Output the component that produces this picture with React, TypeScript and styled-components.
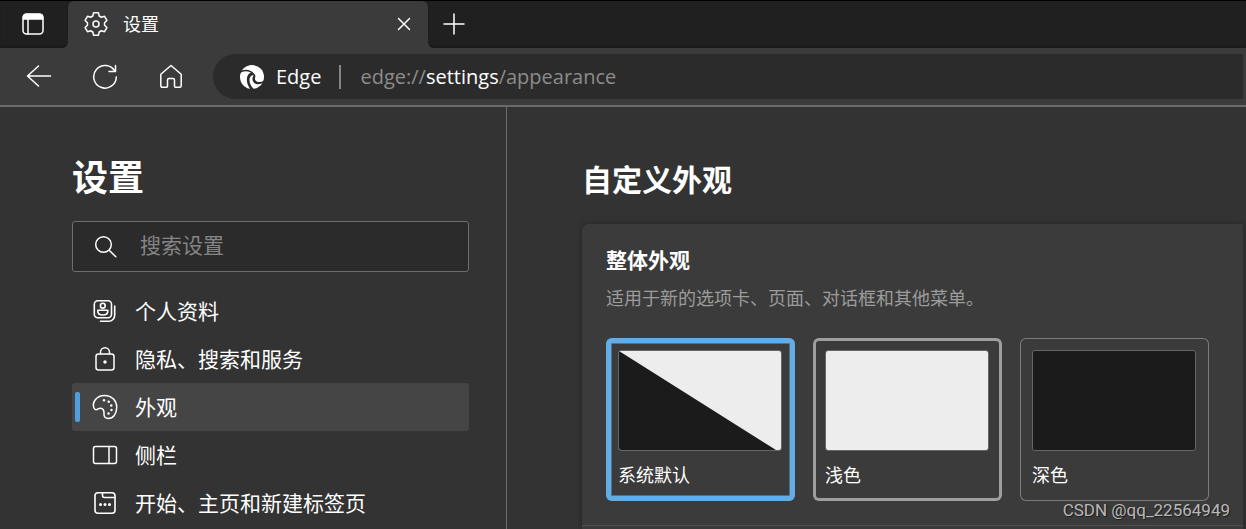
import React from "react";
import styled, { createGlobalStyle } from "styled-components";

const GlobalStyle = createGlobalStyle`
  *, *::before, *::after { box-sizing: border-box; }
  body {
    margin: 0;
    background: #333333;
    color: #ffffff;
    font-family: "Open Sans", "Noto Sans CJK SC", sans-serif;
  }
  button, input { font-family: inherit; }
`;

const Window = styled.div`
  min-height: 100vh;
  display: flex;
  flex-direction: column;
`;

/* ---------- browser chrome ---------- */

const TabStrip = styled.header`
  display: flex;
  height: 48px;
  background: #3b3b3b;
  border-top: 1px solid #000000;
`;

const StripSide = styled.div<{ $side: "start" | "end" }>`
  display: flex;
  align-items: center;
  padding-bottom: 2px;
  background: #202020;
  box-shadow: inset 0 -3px 3px -2px #181818;
  ${(p) =>
    p.$side === "start"
      ? "width: 68px; padding-left: 22px; border-bottom-right-radius: 6px;"
      : "flex: 1; padding-left: 14px; border-bottom-left-radius: 6px;"}
`;

const TabSlot = styled.div`
  width: 360px;
  background: linear-gradient(#202020 50%, #3b3b3b 50%);
`;

const Tab = styled.div`
  height: 100%;
  display: flex;
  align-items: center;
  padding: 0 16px 2px;
  background: #3b3b3b;
  border-radius: 6px 6px 0 0;
`;

const TabTitle = styled.span`
  flex: 1;
  margin-left: 15px;
  font-size: 18px;
  line-height: 24px;
`;

const IconButton = styled.button`
  display: flex;
  padding: 0;
  border: 0;
  background: none;
  color: inherit;
`;

const Toolbar = styled.div`
  display: flex;
  align-items: center;
  padding: 6px 3px 6px 26px;
  background: #3b3b3b;
  border-bottom: 2px solid #6a6a6a;
`;

const NavButtons = styled.nav`
  display: flex;
  gap: 40px;
  margin-right: 29px;
`;

const AddressBar = styled.div`
  flex: 1;
  display: flex;
  align-items: center;
  height: 45px;
  padding-left: 27px;
  background: #2b2b2b;
  border-radius: 23px 0 0 23px;
  font-size: 20px;
  line-height: 28px;
`;

const SiteName = styled.span`
  margin: 0 18px 0 12px;
`;

const Separator = styled.span`
  width: 2px;
  height: 24px;
  margin-right: 19px;
  background: #858585;
`;

const Url = styled.span`
  color: #8c8c8c;
`;

const UrlHost = styled.span`
  color: #ffffff;
`;

/* ---------- sidebar ---------- */

const Body = styled.div`
  flex: 1;
  display: flex;
`;

const Sidebar = styled.aside`
  width: 507px;
  flex-shrink: 0;
  padding: 45px 37px 0 72px;
  border-right: 1px solid #6e6e6e;
`;

const SidebarTitle = styled.h1`
  margin: 0 0 17px;
  font-size: 36px;
  line-height: 52px;
`;

const SearchBox = styled.label`
  display: flex;
  align-items: center;
  gap: 22px;
  height: 51px;
  margin-bottom: 15px;
  padding: 0 21px;
  background: #2b2b2b;
  border: 1px solid #6e6e6e;
  border-radius: 3px;
`;

const SearchInput = styled.input`
  flex: 1;
  min-width: 0;
  padding: 0 0 4px;
  border: 0;
  outline: 0;
  background: none;
  color: #ffffff;
  font-size: 21px;
  line-height: 28px;
  &::placeholder { color: #858585; opacity: 1; }
`;

const MenuList = styled.ul`
  margin: 0;
  padding: 0;
  list-style: none;
`;

const MenuLink = styled.a<{ $active?: boolean }>`
  display: flex;
  align-items: center;
  gap: 17px;
  height: 48px;
  padding-left: ${(p) => (p.$active ? "3px" : "20px")};
  border-radius: 3px;
  background: ${(p) => (p.$active ? "#454545" : "transparent")};
  color: #ffffff;
  font-size: 21px;
  line-height: 28px;
  text-decoration: none;
`;

const ActiveMark = styled.span`
  width: 5px;
  height: 30px;
  margin-right: -5px;
  border-radius: 2px;
  background: #4f9fe0;
`;

/* ---------- main pane ---------- */

const Main = styled.main`
  flex: 1;
  min-width: 0;
  display: flex;
  flex-direction: column;
  padding: 47px 3px 0 75px;
`;

const PageTitle = styled.h2`
  margin: 0 0 18px;
  font-size: 30px;
  line-height: 52px;
`;

const Card = styled.section`
  flex: 1;
  background: #3b3b3b;
  border-radius: 6px 0 0 0;
  box-shadow: 0 0 5px #242424;
`;

const ThemeSection = styled.div`
  padding: 20px 24px 24px;
  border-bottom: 1px solid #505050;
`;

const SectionTitle = styled.h3`
  margin: 0;
  font-size: 21px;
  line-height: 32px;
`;

const SectionHint = styled.p`
  margin: 9px 0 27px;
  color: #9c9c9c;
  font-size: 18px;
  line-height: 26px;
`;

const ThemeList = styled.div`
  display: flex;
  flex-wrap: wrap;
  gap: 18px;
`;

type Outline = "selected" | "hovered" | "plain";

const outlines: Record<Outline, string> = {
  selected: "inset 0 0 0 5px #62ade6, inset 0 0 0 6px #517187",
  hovered: "inset 0 0 0 3px #9e9e9e",
  plain: "inset 0 0 0 1px #7c7c7c",
};

const ThemeOption = styled.label<{ $outline: Outline }>`
  width: 189px;
  padding: 12px 13px 12px 12px;
  border-radius: 6px;
  box-shadow: ${(p) => outlines[p.$outline]};
`;

const HiddenRadio = styled.input`
  position: absolute;
  opacity: 0;
  margin: 0;
`;

const Preview = styled.svg`
  display: block;
  width: 100%;
  height: 101px;
  margin-bottom: 11px;
  border: 1px solid #666666;
  border-radius: 3px;
`;

const ThemeName = styled.span`
  display: block;
  font-size: 18px;
  line-height: 27px;
`;

const Watermark = styled.span`
  position: absolute;
  right: 16px;
  bottom: 8px;
  color: #b8b8b8;
  font-family: Roboto, "Liberation Sans", sans-serif;
  font-size: 17px;
  line-height: 22px;
  text-shadow: 1px 1px 1px #1c1c1c;
`;

const Shell = styled.div`
  position: relative;
`;

/* ---------- icons ---------- */

type IconProps = { size?: number; weight?: number; children: React.ReactNode };

const Icon = ({ size = 26, weight = 1.5, children }: IconProps) => (
  <svg
    width={size}
    height={size}
    viewBox={`0 0 ${size} ${size}`}
    fill="none"
    stroke="currentColor"
    strokeWidth={weight}
    strokeLinecap="round"
    strokeLinejoin="round"
    aria-hidden="true"
  >
    {children}
  </svg>
);

const gearOutline = [0, 60, 120, 180, 240, 300]
  .flatMap((deg) => {
    const a = (deg * Math.PI) / 180;
    return [[-3.2, -8], [-2.4, -11.2], [2.4, -11.2], [3.2, -8]].map(
      ([x, y]) =>
        `${(12 + x * Math.cos(a) - y * Math.sin(a)).toFixed(2)},${(12 + x * Math.sin(a) + y * Math.cos(a)).toFixed(2)}`
    );
  })
  .join(" ");

const GearIcon = () => (
  <Icon size={24}>
    <polygon points={gearOutline} />
    <circle cx="12" cy="12" r="3" />
  </Icon>
);

const TabsIcon = () => (
  <Icon size={22}>
    <rect x="1" y="1" width="20" height="20" rx="3.5" />
    <path d="M1.5 6V4A2.5 2.5 0 0 1 4 1.5h14A2.5 2.5 0 0 1 20.500 4v2z" fill="currentColor" />
    <path d="M6 6v15" />
  </Icon>
);

const CloseIcon = () => (
  <Icon size={16}>
    <path d="M2.500 2.500l11 11M13.500 2.500L2.500 13.500" />
  </Icon>
);

const PlusIcon = () => (
  <Icon size={24}>
    <path d="M12 2v20M2 12h20" />
  </Icon>
);

const BackIcon = () => (
  <Icon>
    <path d="M24.500 12H1.500M12.500 2L1.500 12l11 10" />
  </Icon>
);

const ReloadIcon = () => (
  <Icon>
    <path d="M23 7.500A11.300 11.300 0 1 0 24.300 13M23.500 1.500v6h-6.500" />
  </Icon>
);

const HomeIcon = () => (
  <Icon>
    <path d="M2.800 10.300L13 1.500l10.200 8.800v11.500a1.500 1.500 0 0 1-1.500 1.500h-4.200a1 1 0 0 1-1-1v-6.300a1.500 1.500 0 0 0-1.500-1.500h-4a1.500 1.500 0 0 0-1.500 1.500v6.300a1 1 0 0 1-1 1H4.300a1.500 1.500 0 0 1-1.500-1.500z" />
  </Icon>
);

const EdgeIcon = () => (
  <svg width="24" height="24" viewBox="0 0 24 24" aria-hidden="true">
    <circle cx="12" cy="12" r="12" fill="#fff" />
    <g fill="#2b2b2b">
      <path d="M-1 4.500L1.500 5.500C6 3.800 11 4.800 13.800 8.200L12.500 9.300C10 6.200 5.500 5.500 1 7.500L-1 9z" />
      <path d="M9.500 8.300C5.800 11.500 5.800 18.500 10.500 24.500L14.500 24.500C9.500 20.500 8.200 14.500 10.800 11.200C12 9.700 14 9.800 14.500 11.500L15 9.500C13.500 7.500 11 7.200 9.500 8.300z" />
      <path d="M13 11.500C11 15.500 14 19.300 18 19.300C20.500 19.300 22.500 18.500 24.500 17L24.500 15C21.500 17.500 17.500 17.800 15.800 15.800C14.500 14.300 15 12.500 15.500 11.200C15.200 9.500 13.800 9.800 13 11.500z" />
    </g>
  </svg>
);

const SearchIcon = () => (
  <Icon size={24} weight={1.5}>
    <circle cx="9.500" cy="9.500" r="7.800" />
    <path d="M15.200 15.200L21.800 21.800" />
  </Icon>
);

const ProfileIcon = () => (
  <Icon weight={1.6}>
    <rect x="2.300" y="2.800" width="17.200" height="17" rx="3.500" />
    <circle cx="10.800" cy="7.700" r="2.400" />
    <path d="M5.800 12.300h10v1c0 2.300-2 3.700-5 3.700s-5-1.400-5-3.700z" />
    <path d="M22.700 8v9.300a6 6 0 0 1-6 6H8.500" />
  </Icon>
);

const LockIcon = () => (
  <Icon>
    <rect x="4" y="8" width="18" height="16" rx="2.500" />
    <path d="M8.500 8V6.200a4.500 4.500 0 0 1 9 0V8" />
    <circle cx="13" cy="16" r="1" fill="currentColor" />
  </Icon>
);

const PaletteIcon = () => (
  <Icon>
    <path d="M2 14C-0.500 8 5 1.500 12.500 1.500C20 1.500 25 7 24.700 13.700C24.500 20 21 24.500 16.500 24.500C13 24.500 11.800 22.500 12 19.500C12.200 16.500 11 14.300 8.500 14.300C6 14.300 5.500 16 4 15.800C3 15.600 2.500 15 2 14z" />
    <g fill="currentColor" stroke="none">
      <circle cx="12" cy="6.300" r="1.200" />
      <circle cx="16.700" cy="7.800" r="1.200" />
      <circle cx="19.300" cy="11.500" r="1.200" />
      <circle cx="19.500" cy="16" r="1.200" />
      <circle cx="16.500" cy="19.500" r="1.200" />
    </g>
  </Icon>
);

const SidebarIcon = () => (
  <Icon>
    <rect x="1.500" y="4.500" width="23" height="17" rx="2" />
    <path d="M17 4.500v17" />
  </Icon>
);

const StartPageIcon = () => (
  <Icon weight={1.6}>
    <rect x="3" y="2.700" width="20" height="20.600" rx="3" />
    <path d="M10.500 3v2.500a2 2 0 0 0 2 2H23" />
    <g fill="currentColor" stroke="none">
      <circle cx="8.500" cy="14.500" r="1.500" />
      <circle cx="13" cy="14.500" r="1.500" />
      <circle cx="17.500" cy="14.500" r="1.500" />
    </g>
  </Icon>
);

/* ---------- data ---------- */

const menu = [
  { label: "个人资料", icon: <ProfileIcon /> },
  { label: "隐私、搜索和服务", icon: <LockIcon /> },
  { label: "外观", icon: <PaletteIcon />, active: true },
  { label: "侧栏", icon: <SidebarIcon /> },
  { label: "开始、主页和新建标签页", icon: <StartPageIcon /> },
];

const themes: { id: string; name: string; outline: Outline }[] = [
  { id: "system", name: "系统默认", outline: "selected" },
  { id: "light", name: "浅色", outline: "hovered" },
  { id: "dark", name: "深色", outline: "plain" },
];

const ThemePreview = ({ id }: { id: string }) => (
  <Preview viewBox="0 0 162 99" preserveAspectRatio="none" aria-hidden="true">
    <rect width="162" height="99" fill={id === "dark" ? "#1b1b1b" : "#ededed"} />
    {id === "system" && <polygon points="0,0 157,99 0,99" fill="#1b1b1b" />}
  </Preview>
);

export default function App() {
  return (
    <Shell>
      <GlobalStyle />
      <Window>
        <TabStrip>
          <StripSide $side="start">
            <IconButton aria-label="标签页操作菜单"><TabsIcon /></IconButton>
          </StripSide>
          <TabSlot>
            <Tab>
              <GearIcon />
              <TabTitle>设置</TabTitle>
              <IconButton aria-label="关闭标签页"><CloseIcon /></IconButton>
            </Tab>
          </TabSlot>
          <StripSide $side="end">
            <IconButton aria-label="新建标签页"><PlusIcon /></IconButton>
          </StripSide>
        </TabStrip>

        <Toolbar>
          <NavButtons>
            <IconButton aria-label="返回"><BackIcon /></IconButton>
            <IconButton aria-label="刷新"><ReloadIcon /></IconButton>
            <IconButton aria-label="主页"><HomeIcon /></IconButton>
          </NavButtons>
          <AddressBar>
            <EdgeIcon />
            <SiteName>Edge</SiteName>
            <Separator />
            <Url>edge://<UrlHost>settings</UrlHost>/appearance</Url>
          </AddressBar>
        </Toolbar>

        <Body>
          <Sidebar>
            <SidebarTitle>设置</SidebarTitle>
            <SearchBox>
              <SearchIcon />
              <SearchInput type="search" placeholder="搜索设置" aria-label="搜索设置" />
            </SearchBox>
            <nav>
              <MenuList>
                {menu.map((item) => (
                  <li key={item.label}>
                    <MenuLink href="#" $active={item.active}>
                      {item.active && <ActiveMark />}
                      {item.icon}
                      <span>{item.label}</span>
                    </MenuLink>
                  </li>
                ))}
              </MenuList>
            </nav>
          </Sidebar>

          <Main>
            <PageTitle>自定义外观</PageTitle>
            <Card>
              <ThemeSection>
                <SectionTitle>整体外观</SectionTitle>
                <SectionHint>适用于新的选项卡、页面、对话框和其他菜单。</SectionHint>
                <ThemeList>
                  {themes.map((theme) => (
                    <ThemeOption key={theme.id} $outline={theme.outline}>
                      <HiddenRadio type="radio" name="theme" defaultChecked={theme.id === "system"} />
                      <ThemePreview id={theme.id} />
                      <ThemeName>{theme.name}</ThemeName>
                    </ThemeOption>
                  ))}
                </ThemeList>
              </ThemeSection>
            </Card>
          </Main>
        </Body>
      </Window>
      <Watermark>CSDN @qq_22564949</Watermark>
    </Shell>
  );
}
